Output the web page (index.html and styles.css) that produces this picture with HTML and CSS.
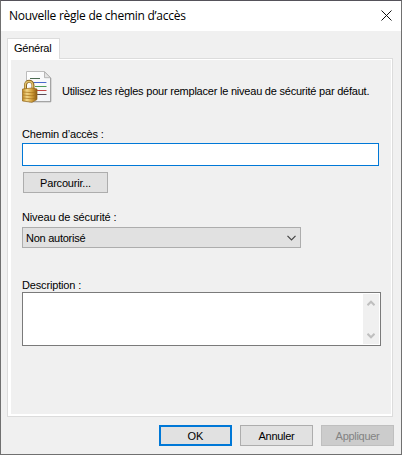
FILE: index.html
```
<!DOCTYPE html>
<html lang="fr">
<head>
<meta charset="utf-8">
<title>Nouvelle règle de chemin d’accès</title>
<link rel="stylesheet" href="styles.css">
</head>
<body>
<div class="dialog">
  <header class="titlebar">
    <h1 class="title">Nouvelle règle de chemin d’accès</h1>
    <svg class="close" width="11" height="11" viewBox="0 0 11 11"><path d="M.5 .5l10 10M10.5 .5l-10 10" stroke="#111" stroke-width="1" fill="none"/></svg>
  </header>
  <div class="tabs"><div class="tab"><span class="t-tab">Général</span></div></div>
  <main class="panel">
    <div class="page">
      <div class="intro">
        <svg class="icon" width="32" height="32" viewBox="0 0 32 32">
          <defs>
            <linearGradient id="gold" x1="0" x2="1"><stop offset="0" stop-color="#c08b25"/><stop offset=".3" stop-color="#f3d88a"/><stop offset=".65" stop-color="#d3a03c"/><stop offset="1" stop-color="#8c5a12"/></linearGradient>
            <linearGradient id="sheet" x1="0" x2="1" y2="1"><stop offset="0" stop-color="#fff"/><stop offset="1" stop-color="#f1f3f6"/></linearGradient>
          </defs>
          <path d="M4.500 .5h18l6 6v24H4.500z" fill="url(#sheet)" stroke="#bcbcbc"/>
          <path d="M28.800 7v23.800H7" fill="none" stroke="#929292" stroke-width=".8"/>
          <path d="M22.500 .8v5.900h5.900z" fill="#e4e4e4" stroke="#aaa" stroke-width=".8"/>
          <path d="M8 7.500h10" stroke="#4c6b52"/>
          <path d="M8 11.500h16.500" stroke="#5d95d8"/>
          <path d="M12 11.500h12" stroke="#4968cc"/>
          <path d="M13 15.500h11.500" stroke="#4b9a57"/>
          <path d="M14 19.500h10.500" stroke="#c24545"/>
          <path d="M14 23.500h10.500" stroke="#5a4a55"/>
          <path d="M3.500 18v-3.500c0-5.600 7.500-5.600 7.500 0V18" fill="none" stroke="#8c651e" stroke-width="3"/>
          <path d="M3.300 18v-3.500c0-5.400 7.400-5.400 7.400 0V18" fill="none" stroke="#e1c370" stroke-width="1.400"/>
          <path d="M.5 18l9.500-1 5 1v10.500L10 31.300.5 30z" fill="url(#gold)" stroke="#94651a" stroke-width=".7"/>
          <path d="M1 21l9 .7 4.500-.8M1 24l9 .8 4.500-.8M1 27l9 .8 4.500-.8" fill="none" stroke="#a6711d" stroke-width=".7"/>
        </svg>
        <p class="t-intro">Utilisez les règles pour remplacer le niveau de sécurité par défaut.</p>
      </div>
      <label class="label path-label t-path" for="path">Chemin d’accès :</label>
      <input class="path" id="path" type="text">
      <button class="btn browse"><span class="t-browse">Parcourir...</span></button>
      <div class="label level-label t-level">Niveau de sécurité :</div>
      <div class="select"><span class="t-select">Non autorisé</span>
        <svg width="9" height="6" viewBox="0 0 9 6"><path d="M.5 .8l4 4 4-4" fill="none" stroke="#444" stroke-width="1.200"/></svg>
      </div>
      <div class="label desc-label t-desc">Description :</div>
      <div class="desc">
        <div class="scroll">
          <svg width="8" height="6" viewBox="0 0 8 6"><path d="M.5 5.200L4 1.700l3.500 3.500" fill="none" stroke="#bfbfbf" stroke-width="2"/></svg>
          <svg width="8" height="6" viewBox="0 0 8 6"><path d="M.5 .8L4 4.300 7.500 .8" fill="none" stroke="#bfbfbf" stroke-width="2"/></svg>
        </div>
      </div>
    </div>
  </main>
  <footer class="actions">
    <button class="btn ok"><span class="t-ok">OK</span></button>
    <button class="btn"><span class="t-cancel">Annuler</span></button>
    <button class="btn" disabled><span class="t-apply">Appliquer</span></button>
  </footer>
</div>
</body>
</html>
```
FILE: styles.css
```
* { box-sizing: border-box; }
body { margin: 0; }
.dialog {
  width: 402px;
  height: 455px;
  border: 1px solid #707070;
  border-top-color: #55525a;
  background: #f0f0f0;
  color: #000;
  font: 11px/14px "Liberation Sans", sans-serif;
  white-space: nowrap;
  overflow: hidden;
}
.titlebar {
  display: flex;
  justify-content: space-between;
  height: 30px;
  padding: 6px 9px 0 8px;
  background: #fff;
}
.title { margin: 0; font: 12px/17px "Open Sans", sans-serif; letter-spacing: -0.26px; }
.close { margin-top: 3px; }
.tabs { display: flex; padding: 7px 0 0 6px; }
.tab {
  position: relative;
  z-index: 1;
  width: 53px;
  height: 21px;
  margin-bottom: -1px;
  padding: 2px 0 0 6px;
  border: 1px solid #dcdcdc;
  border-bottom: 0;
  background: #fff;
}
.panel {
  width: 386px;
  height: 359px;
  margin-left: 6px;
  padding: 1px 1px 2px 3px;
  border: 1px solid #dcdcdc;
  background: #fff;
}
.page { height: 354px; padding: 11px 10px 0 11px; background: #f0f0f0; }
.intro { display: flex; height: 32px; }
.icon { flex: none; }
.intro p { margin: 13px 0 0 8px; }
.label { display: block; height: 14px; }
.path-label { margin-top: 24px; }
.path {
  display: block;
  width: 357px;
  height: 23px;
  margin-top: 2px;
  border: 1px solid #0078d7;
  background: #fff;
  outline: 0;
}
.btn {
  display: flex;
  align-items: center;
  justify-content: center;
  width: 73px;
  height: 21px;
  padding: 0;
  border: 1px solid #adadad;
  border-radius: 0;
  background: #e1e1e1;
  color: #000;
  font: inherit;
}
.browse { width: 85px; margin: 6px 0 0 1px; }
.level-label { margin-top: 17px; }
.select {
  display: flex;
  align-items: center;
  justify-content: space-between;
  width: 279px;
  height: 21px;
  margin-top: 3px;
  padding: 0 4px 0 3px;
  border: 1px solid #adadad;
  background: #e1e1e1;
}
.desc-label { margin-top: 30px; }
.desc {
  display: flex;
  justify-content: flex-end;
  width: 359px;
  height: 54px;
  padding: 1px;
  border: 1px solid #7a7a7a;
  background: #fff;
}
.scroll {
  display: flex;
  flex-direction: column;
  justify-content: space-between;
  align-items: center;
  width: 16px;
  padding: 6px 0 5px;
  background: #f0f0f0;
}
.actions { display: flex; gap: 8px; padding: 8px 0 0 158px; }
.ok { border: 2px solid #0078d7; }
.btn:disabled { border-color: #bfbfbf; background: #ccc; color: #838383; }
.t-tab { letter-spacing: -0.25px; }
.t-intro { letter-spacing: -0.22px; }
.t-path { letter-spacing: -0.17px; }
.t-browse { letter-spacing: -0.2px; }
.t-level { letter-spacing: -0.14px; }
.t-select { letter-spacing: -0.26px; }
.t-desc { letter-spacing: -0.16px; }
.t-cancel { letter-spacing: -0.3px; }
.t-apply { letter-spacing: -0.3px; }
```
